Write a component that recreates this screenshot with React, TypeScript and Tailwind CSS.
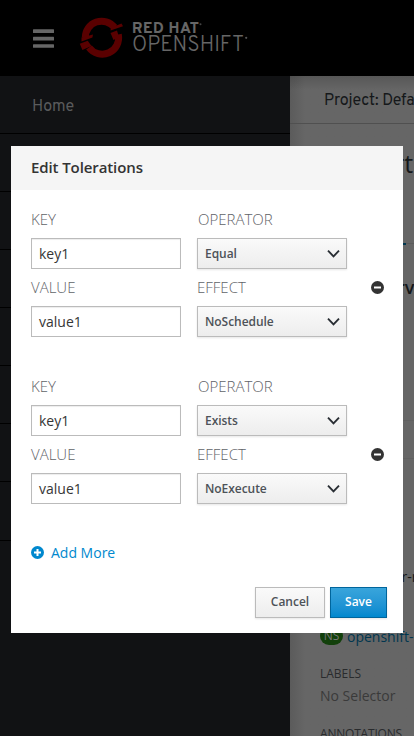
import React from "react";

function Select({ value }: { value: string }) {
  return (
    <button className="flex h-[31px] w-[150px] items-center justify-between border border-[#bbb] bg-linear-to-b from-[#fafafa] to-[#ededed] pr-[6.5px] pl-[7px] text-[12px] font-semibold tracking-[-0.05px] text-[#4d5258] shadow-[0_1px_2px_rgba(3,3,3,0.1)]">
      <span>{value}</span>
      <svg width="13" height="9" viewBox="0 0 13 9" fill="none" stroke="#292e34" strokeWidth="1.9">
        <path d="M1 1.7 6.5 7.3 12 1.7" />
      </svg>
    </button>
  );
}

function Field({ value }: { value: string }) {
  return (
    <div className="flex h-[31px] w-[150px] items-center border border-[#bbb] bg-white pl-[7px] text-[14px] font-normal text-[#363636] shadow-[inset_0_1px_1px_rgba(3,3,3,0.075)]">
      {value}
    </div>
  );
}

function Toleration({ operator, effect }: { operator: string; effect: string }) {
  return (
    <div className="flex items-start justify-between">
      <div className="grid grid-cols-[150px_150px] grid-rows-[38px_31px_37px_31px] gap-x-4 text-[15px] font-light text-[#5f6368]">
        <span className="leading-[39px]">KEY</span>
        <span className="pl-px leading-[39px]">OPERATOR</span>
        <Field value="key1" />
        <Select value={operator} />
        <span className="leading-[37px]">VALUE</span>
        <span className="leading-[37px]">EFFECT</span>
        <Field value="value1" />
        <Select value={effect} />
      </div>
      <svg className="mt-[81px] mr-[19px]" width="13" height="13" viewBox="0 0 13 13">
        <circle cx="6.5" cy="6.5" r="6.5" fill="#333" />
        <path d="M3 6.5h7" stroke="#fff" strokeWidth="2" />
      </svg>
    </div>
  );
}

function Logo() {
  return (
    <svg width="172" height="46" viewBox="0 0 172 46">
      <g fill="none" stroke="#5a0000" strokeWidth="7">
        <path d="M6.3 22.5A16.4 16.4 0 0 1 35.5 12.3" />
        <path d="M39.3 19.5A16.4 16.4 0 0 1 10 32.5" />
      </g>
      <path d="M30.5 16.8 44.5 11.8M0 28 14.5 23" stroke="#000" strokeWidth="1.6" />
      <g fill="#5a0000">
        <path d="M32 12.8 42.5 8.4 44 11.2 31.5 15.6z" />
        <path d="M31.5 18 38 15.6 40 22 34.5 25z" />
        <path d="M2.5 22.5 14 19.6 13.4 22.6 2.5 26.4z" />
        <path d="M.8 28.8 8.7 25.8 12.5 31 3.4 35z" />
      </g>
      <g fontFamily="Overpass, Lato, sans-serif" fill="#666">
        <text x="53" y="18.3" fontSize="15" fontWeight="800" textLength="67">RED HAT</text>
        <text x="53" y="36" fontSize="22.5" fontWeight="300" textLength="112" lengthAdjust="spacingAndGlyphs">OPENSHIFT</text>
      </g>
      <circle cx="121.5" cy="9.3" r="1" fill="#444" />
      <circle cx="167.2" cy="22.8" r="1.1" fill="#555" />
    </svg>
  );
}

const heights = [
  "h-[58px]", "h-[58px]", "h-[58px]", "h-[58px]",
  "h-[58px]", "h-[58px]", "h-[58px]", "h-[59px]",
];

export default function App() {
  return (
    <div className="relative h-[736px] w-[414px] overflow-hidden bg-[#666] font-['Open_Sans','Noto_Sans',sans-serif]">
      <header className="flex h-[76px] items-center bg-black pl-[33px]">
        <svg width="21" height="19" viewBox="0 0 21 19" fill="#666">
          <rect y="0.3" width="21" height="3.6" rx="0.5" />
          <rect y="7.8" width="21" height="3.6" rx="0.5" />
          <rect y="15.2" width="21" height="3.6" rx="0.5" />
        </svg>
        <div className="ml-[25px]"><Logo /></div>
      </header>

      <div className="flex h-[660px]">
        <nav className="w-[290px] shrink-0 bg-[#111214]">
          {heights.map((h, i) => (
            <div key={i} className={`${h} flex items-center border-b border-black pl-8 font-['Overpass','Roboto',sans-serif] text-[16px] text-[#5a5b5c]`}>
              {i === 0 && <span className="pt-[4px] tracking-[-0.1px]">Home</span>}
            </div>
          ))}
        </nav>

        <main className="w-[124px] shrink-0 overflow-hidden bg-linear-to-r from-[#5b5b5b] to-[#666] to-12% whitespace-nowrap text-[#15181a]">
          <div className="flex h-12 items-center border-b border-[#505050] bg-linear-to-b from-black/15 to-transparent to-30% pt-[2px] pl-[34px] font-['Overpass','Roboto',sans-serif] text-[16px] tracking-[-0.1px]">
            Project: Default
          </div>
          <div className="h-[119px] pt-[22px] pl-[104px] text-[25px] leading-[34px]">rt</div>
          <div className="flex h-[2px]">
            <div className="w-[116px] bg-[#00364f]" />
            <div className="mb-px flex-1 bg-[#5c5c5c]" />
          </div>
          <div className="h-[176px] border-b border-[#606060] pt-[30px] pl-[107px] text-[18px] leading-[24px] font-semibold">rv</div>
          <div className="h-[38px] border-b border-[#606060]" />
          <div className="h-[168px] pt-[108px] pl-[111.5px] text-[14px] leading-[20px]">r-r</div>
          <div className="flex h-[18px] items-center gap-1 pl-[30px]">
            <span className="flex h-[18px] w-[23px] shrink-0 items-center justify-center rounded-full bg-[#12400b] text-[12px] text-[#777]">NS</span>
            <span className="text-[14px] text-[#00364f]">openshift-ingress</span>
          </div>
          <div className="pt-[20px] pl-[30px] text-[12px] leading-[18px] text-[#292b2d]">LABELS</div>
          <div className="pt-[3px] pl-[30px] text-[14px] leading-[20px] text-[#3a3a3a]">No Selector</div>
          <div className="pt-[19px] pl-[30px] text-[12px] leading-[18px] tracking-[-0.2px] text-[#292b2d]">ANNOTATIONS</div>
        </main>
      </div>

      <section className="absolute top-[146px] left-[11px] flex h-[487px] w-[392px] flex-col bg-white">
        <h2 className="h-11 shrink-0 bg-[#f5f5f5] pl-5 text-[15px] leading-[43px] font-semibold tracking-[-0.1px] text-[#333]">Edit Tolerations</h2>
        <div className="flex flex-col gap-[30px] pt-[10px] pl-5">
          <Toleration operator="Equal" effect="NoSchedule" />
          <Toleration operator="Exists" effect="NoExecute" />
        </div>
        <button className="mt-[38px] ml-5 flex h-5 items-center gap-[7px] self-start text-[14px] text-[#0088ce]">
          <svg width="13" height="13" viewBox="0 0 13 13">
            <circle cx="6.5" cy="6.5" r="6.5" fill="#0088ce" />
            <path d="M3 6.5h7M6.5 3v7" stroke="#fff" strokeWidth="2" />
          </svg>
          Add More
        </button>
        <div className="mt-[25px] flex justify-end gap-[5px] pr-4 text-[12px] font-semibold">
          <button className="h-[31px] w-[70px] border border-[#bbb] bg-linear-to-b from-[#fafafa] to-[#ededed] pb-[2px] text-[#4d5258] shadow-[0_1px_2px_rgba(3,3,3,0.1)]">Cancel</button>
          <button className="h-[31px] w-[57px] border border-[#00659c] bg-linear-to-b from-[#39a5dc] to-[#0088ce] pb-[2px] text-white shadow-[0_1px_2px_rgba(3,3,3,0.1)]">Save</button>
        </div>
      </section>
    </div>
  );
}
